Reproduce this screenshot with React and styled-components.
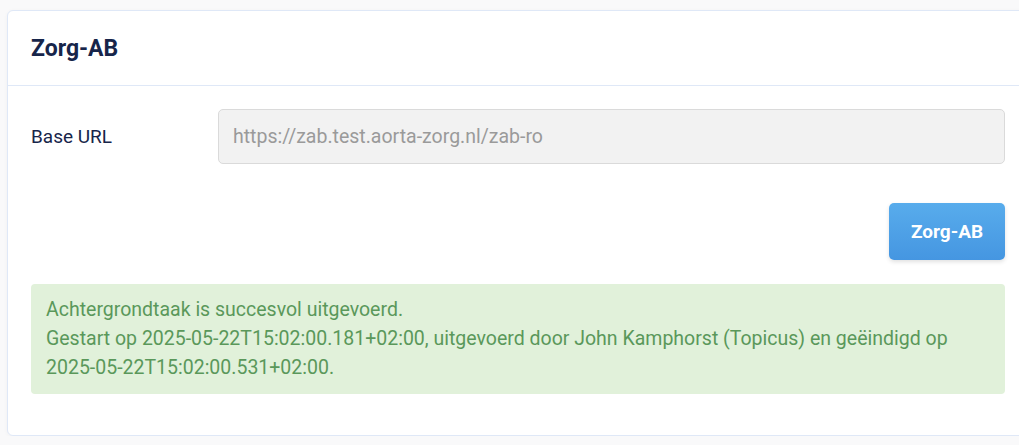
import React from 'react'
import styled, { createGlobalStyle } from 'styled-components'

const GlobalStyle = createGlobalStyle`
  html, body {
    margin: 0;
    padding: 0;
    background: #f9f9fa;
    overflow: hidden;
  }
  body {
    font-family: Roboto, "Liberation Sans", sans-serif;
  }
`;

const Page = styled.div`
  padding: 10px 0 0 7px;
  width: 1100px;
`;

const Card = styled.div`
  width: 1020px;
  background: #fff;
  border: 1px solid #dfe8f7;
  border-radius: 6px;
  box-shadow: 0 1px 4px rgba(0, 0, 0, 0.04);
`;

const Header = styled.div`
  height: 74px;
  display: flex;
  align-items: center;
  padding: 0 23px;
  border-bottom: 1px solid #dfe8f7;
`;

const Title = styled.h2`
  margin: 0;
  font-size: 23px;
  font-weight: 700;
  color: #17254a;
`;

const Body = styled.div`
  padding: 23px 23px 41px;
`;

const FormRow = styled.div`
  display: grid;
  grid-template-columns: 187px 1fr;
  align-items: center;
`;

const Label = styled.label`
  font-size: 19px;
  color: #17254a;
`;

const Input = styled.input`
  height: 55px;
  box-sizing: border-box;
  padding: 0 14px;
  border: 1px solid #dadada;
  border-radius: 5px;
  background: #f2f2f2;
  font-family: Roboto, "Liberation Sans", sans-serif;
  font-size: 19.5px;
  color: #9a9a9a;
  outline: none;
`;

const Actions = styled.div`
  display: flex;
  justify-content: flex-end;
  margin-top: 39px;
`;

const Button = styled.button`
  width: 116px;
  height: 57px;
  border: none;
  border-radius: 5px;
  background: linear-gradient(180deg, #58acec 0%, #4596e1 100%);
  box-shadow: 0 2px 4px rgba(0, 0, 0, 0.12);
  color: #fff;
  font-family: Roboto, "Liberation Sans", sans-serif;
  font-size: 19px;
  font-weight: 700;
  cursor: pointer;
`;

const Alert = styled.div`
  margin-top: 24px;
  padding: 11px 15px 12px;
  background: #e1f1da;
  border-radius: 4px;
  color: #5a985a;
  font-size: 19.5px;
  line-height: 29px;
`;

export default function App() {
  return (
    <>
      <GlobalStyle />
      <Page>
        <Card>
          <Header>
            <Title>Zorg-AB</Title>
          </Header>
          <Body>
            <FormRow>
              <Label>Base URL</Label>
              <Input readOnly value="https://zab.test.aorta-zorg.nl/zab-ro" />
            </FormRow>
            <Actions>
              <Button>Zorg-AB</Button>
            </Actions>
            <Alert>
              Achtergrondtaak is succesvol uitgevoerd.
              <br />
              Gestart op 2025-05-22T15:02:00.181+02:00, uitgevoerd door John Kamphorst (Topicus) en geëindigd op 2025-05-22T15:02:00.531+02:00.
            </Alert>
          </Body>
        </Card>
      </Page>
    </>
  )
}
